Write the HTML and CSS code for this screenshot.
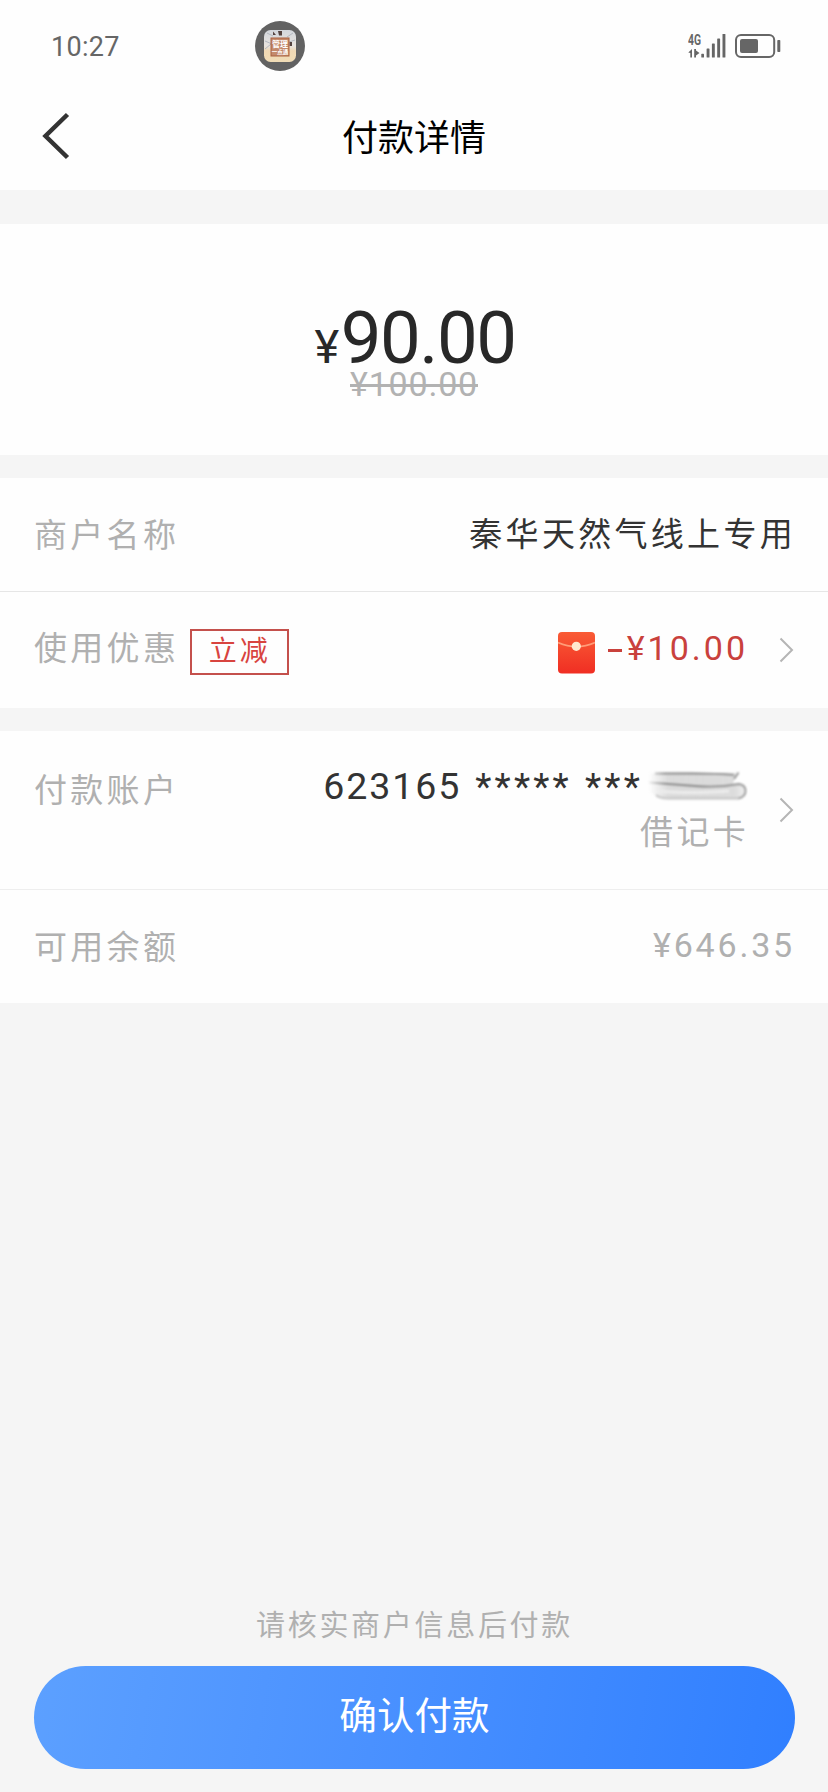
FILE: index.html
```html
<!DOCTYPE html>
<html lang="zh-CN">
<head>
<meta charset="utf-8">
<title>付款详情</title>
<link rel="stylesheet" href="styles.css">
</head>
<body>
<div class="page">
  <header class="top">
    <div class="status">
      <span class="time">10:27</span>
      <svg class="avatar" width="50" height="50" viewBox="0 0 50 50">
        <defs>
          <linearGradient id="room" x1="0" y1="0" x2="0" y2="1">
            <stop offset="0" stop-color="#d3d7dc"/><stop offset=".5" stop-color="#e9e4df"/><stop offset=".65" stop-color="#efd8b4"/><stop offset="1" stop-color="#f0dcb6"/>
          </linearGradient>
        </defs>
        <circle cx="25" cy="25" r="25" fill="#626262"/>
        <rect x="9" y="9" width="32" height="32" rx="6.5" fill="url(#room)"/>
        <path d="M12 12l6 3M10 20l7 3M10 28l6-5M38 12l-6 4M40 19l-6 2" stroke="#b3b8c0" stroke-width="1"/>
        <path d="M18 10.500l3 3.500h-3zM23 10h4v4.500h-3zM34.500 21h2.500v4h-2.500z" fill="#54433f"/>
        <rect x="16" y="17" width="18" height="18" fill="#c48a6c" stroke="#a9603f"/>
        <text class="avatar-text" x="25" y="25.5">管理</text>
        <text class="avatar-text small" x="25" y="33">一点通</text>
      </svg>
      <svg class="signal" width="94" height="34" viewBox="0 -4 94 34" fill="#666">
        <text class="net" x="0" y="11.5" textLength="13" lengthAdjust="spacingAndGlyphs">4G</text>
        <path d="M.3 19.500 4 16v8.500H2.300V20zM6.200 16h1.800v1.500l3.500 2.500L8 22.500v2H6.200z"/>
        <rect x="13.300" y="20.800" width="2.700" height="3.700" rx=".6"/>
        <rect x="18.600" y="15.500" width="2.900" height="9" rx=".6"/>
        <rect x="23.900" y="10.500" width="2.900" height="14" rx=".6"/>
        <rect x="29.200" y="5.500" width="2.900" height="19" rx=".6"/>
        <rect x="34.500" y="1" width="2.900" height="23.500" rx=".6"/>
        <rect x="48" y="2" width="38.200" height="22" rx="5" fill="none" stroke="#666" stroke-width="2"/>
        <rect x="52" y="6" width="18" height="14" rx="2"/>
        <rect x="89.300" y="7" width="3" height="12" rx=".8"/>
      </svg>
    </div>
    <div class="nav">
      <svg class="back" width="28" height="48" viewBox="0 0 28 48"><path d="M25.500 2.500 3.500 24l22 21.500" fill="none" stroke="#333" stroke-width="4.500"/></svg>
      <h1 class="title">付款详情</h1>
    </div>
  </header>

  <section class="card amount">
    <div class="price"><span class="yen">¥</span>90.00</div>
    <div class="old">¥100.00</div>
  </section>

  <section class="card">
    <div class="row merchant">
      <span class="label">商户名称</span>
      <span class="value cjk">秦华天然气线上专用</span>
    </div>
    <div class="row discount">
      <span class="label">使用优惠</span>
      <span class="tag">立减</span>
      <svg class="packet" width="37" height="42" viewBox="0 0 37 42">
        <defs><linearGradient id="red" x1="0" y1="0" x2="0" y2="1"><stop offset="0" stop-color="#f95b35"/><stop offset="1" stop-color="#f02e23"/></linearGradient></defs>
        <rect width="37" height="41.500" rx="4" fill="url(#red)"/>
        <path d="M0 10.500Q18.500 18.500 37 10.500" fill="none" stroke="#ff9c78" stroke-width="1.700"/>
        <circle cx="18.300" cy="14.300" r="4.600" fill="#ffe8cf"/>
      </svg>
      <span class="off"><span class="minus"></span>¥10.00</span>
      <svg class="chev" width="15" height="26" viewBox="0 0 15 26"><path d="M1.500 1.500 13 13 1.500 24.500" fill="none" stroke="#b5b5b5" stroke-width="2"/></svg>
    </div>
  </section>

  <section class="card">
    <div class="row account">
      <span class="label">付款账户</span>
      <div class="bank">
        <div class="number"><span class="digits">623165</span><span class="stars">*****</span><span class="stars last">***</span>
          <svg class="smudge" width="101" height="32" viewBox="0 0 101 32">
            <defs>
              <linearGradient id="fade"><stop offset="0" stop-color="#ccc" stop-opacity="0"/><stop offset=".2" stop-color="#ccc" stop-opacity=".7"/><stop offset=".9" stop-color="#ddd"/><stop offset="1" stop-color="#e4e4e4" stop-opacity=".6"/></linearGradient>
              <linearGradient id="ink" gradientUnits="userSpaceOnUse" x1="0" y1="0" x2="101" y2="0"><stop offset="0" stop-color="#888" stop-opacity="0"/><stop offset=".18" stop-color="#888"/><stop offset=".5" stop-color="#808080"/><stop offset="1" stop-color="#999"/></linearGradient>
              <filter id="soft" x="-10%" y="-20%" width="120%" height="140%"><feGaussianBlur stdDeviation=".8"/></filter>
            </defs>
            <g filter="url(#soft)" fill="none">
              <path d="M2 3H89L86 14H94L98 18V24L93 28H12L2 21z" fill="url(#fade)"/>
              <path d="M12 21Q40 24 82 21" stroke="#ececec" stroke-width="3"/>
              <path d="M8 3.500H45Q70 3.500 87 5" stroke="url(#ink)" stroke-width="2"/>
              <path d="M2 12.500Q25 14 48 16T92 14Q98.500 15 98.500 21T91 28.500" stroke="url(#ink)" stroke-width="1.900"/>
              <path d="M91.500 2.500 87 9" stroke="#888" stroke-width="1.700"/>
              <path d="M9 25Q13 29 24 28.500H92" stroke="#c4c4c4" stroke-width="1.800"/>
            </g>
          </svg>
        </div>
        <div class="kind">借记卡</div>
      </div>
      <svg class="chev" width="15" height="26" viewBox="0 0 15 26"><path d="M1.500 1.500 13 13 1.500 24.500" fill="none" stroke="#b5b5b5" stroke-width="2"/></svg>
    </div>
    <div class="row balance">
      <span class="label">可用余额</span>
      <span class="value money">¥646.35</span>
    </div>
  </section>

  <footer class="footer">
    <p class="hint">请核实商户信息后付款</p>
    <button class="pay" type="button">确认付款</button>
  </footer>
</div>
</body>
</html>
```
FILE: styles.css
```css
* { box-sizing: border-box; }
body { margin: 0; background: #f5f5f5; font-family: Roboto, "Noto Sans CJK SC", sans-serif; }
.page { width: 828px; height: 1792px; display: flex; flex-direction: column; background: #f5f5f5; overflow: hidden; }

.top { height: 190px; background: #fefefe; }
.status { height: 92px; padding: 0 46px 0 51px; display: flex; align-items: center; }
.time { width: 204px; padding-top: 2px; font-size: 27px; line-height: 32px; color: #666; letter-spacing: .3px; }
.avatar-text { font: 700 8px "Noto Sans CJK SC", sans-serif; fill: #fff; text-anchor: middle; }
.avatar-text.small { font-size: 5.500px; }
.signal { margin-left: auto; }
.net { font: 700 14px Roboto, sans-serif; }
.nav { height: 88px; padding: 0 42px; display: grid; grid-template-columns: 28px 1fr 28px; align-items: center; }
.title { margin: 0; padding-top: 5px; text-align: center; font-size: 36px; line-height: 48px; font-weight: 400; color: #000; }

.card { background: #fefefe; margin-bottom: 23px; }
.amount { height: 231px; margin-top: 34px; padding-top: 79px; text-align: center; }
.price { height: 68px; padding-left: 2px; font-size: 72.500px; line-height: 72px; color: #282828; letter-spacing: -1.500px; }
.yen { font-size: 47px; letter-spacing: 1.500px; }
.old { width: 128px; margin: 0 auto; height: 26px; font-size: 34px; line-height: 26px; letter-spacing: .8px; color: #b2b2b2; text-decoration: line-through; text-decoration-thickness: 3px; white-space: nowrap; }

.row { display: flex; align-items: center; padding: 0 34px; }
.label { font-size: 33px; line-height: 48px; letter-spacing: 3.300px; color: #b0b0b0; }
.value { margin-left: auto; margin-right: -1px; letter-spacing: 2.800px; }
.cjk { font-size: 33px; line-height: 48px; letter-spacing: 3.300px; color: #333; margin-right: -2px; }
.merchant { height: 114px; border-bottom: 1px solid #e6e6e6; }
.merchant .label { padding-top: 2px; }
.discount { height: 116px; }
.discount .label { padding-bottom: 2px; }
.tag { width: 99px; height: 46px; margin: 3px 0 0 11px; border: 2px solid #c4504c; color: #d8443f; font-size: 28px; line-height: 41px; letter-spacing: 3px; text-align: center; }
.packet { margin: 5px 0 0 auto; }
.off { display: flex; align-items: center; margin-left: 13px; padding-bottom: 4px; font-size: 34px; line-height: 40px; letter-spacing: 3px; color: #c9413c; }
.minus { width: 14px; height: 3px; margin: 4px 5px 0 0; background: #c9413c; }
.chev { margin-left: 31px; }
.account { height: 159px; border-bottom: 1px solid #eee; }
.account .label { margin-bottom: 38px; }
.bank { margin-left: auto; padding-top: 1px; }
.number { display: flex; align-items: center; height: 44px; padding-bottom: 2px; font-size: 37.500px; color: #333; }
.digits { letter-spacing: 1.900px; }
.stars { letter-spacing: 3.200px; margin-left: 14px; }
.stars.last { margin-left: 13px; }
.smudge { margin-left: 4px; }
.kind { margin-right: -1px; text-align: right; font-size: 33px; line-height: 48px; letter-spacing: 3.300px; color: #b0b0b0; }
.balance { height: 113px; }
.balance .label { padding-top: 2px; }
.money { font-size: 34px; line-height: 40px; padding-bottom: 4px; color: #b0b0b0; }

.footer { margin-top: auto; padding: 0 33px 23px 34px; text-align: center; }
.hint { margin: 0 0 19px; font-size: 29px; line-height: 42px; letter-spacing: 2.700px; color: #b0b0b0; }
.pay { display: block; width: 100%; height: 103px; border: 0; border-radius: 52px; background: linear-gradient(100deg, #5ca0ff, #4a91ff 45%, #307fff); color: #fff; font: 400 37.600px/54px "Noto Sans CJK SC", sans-serif; padding: 0 0 9px; }
```
